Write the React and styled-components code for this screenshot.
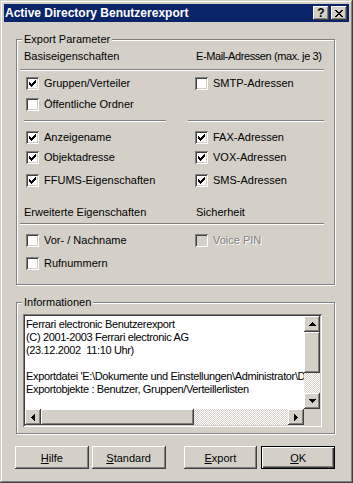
import React from 'react';
import styled, { createGlobalStyle } from 'styled-components';

const GlobalStyle = createGlobalStyle`
  html, body {
    margin: 0;
    padding: 0;
    background: #d4d0c8;
  }
  body {
    font-family: "Liberation Sans", Arial, sans-serif;
    font-size: 11px;
    color: #000;
  }
  * {
    box-sizing: border-box;
  }
`;

const raised = `
  background: #d4d0c8;
  box-shadow: inset -1px -1px #404040, inset 1px 1px #fff, inset -2px -2px #808080, inset 2px 2px #d4d0c8;
`;

const sunken = `
  box-shadow: inset 1px 1px #808080, inset -1px -1px #fff, inset 2px 2px #404040, inset -2px -2px #d4d0c8;
`;

const Window = styled.div`
  width: 353px;
  height: 483px;
  padding: 4px;
  background: #d4d0c8;
  box-shadow: inset -1px -1px #404040, inset 1px 1px #d4d0c8, inset -2px -2px #808080, inset 2px 2px #fff;
  display: flex;
  flex-direction: column;
`;

const TitleBar = styled.div`
  height: 18px;
  background: #0a246a;
  color: #fff;
  font-weight: bold;
  font-size: 12px;
  display: flex;
  align-items: center;
  padding: 0 2px 0 1px;
`;

const Title = styled.span`
  flex: 1;
  white-space: nowrap;
`;

const CaptionButton = styled.div`
  width: 16px;
  height: 14px;
  ${raised}
  display: flex;
  align-items: center;
  justify-content: center;
  margin-left: ${p => p.$ml || 0}px;
  color: #000;
  font-size: 12px;
  font-weight: bold;
  line-height: 14px;
`;

const Body = styled.div`
  padding: 0 14px 0 12px;
  display: flex;
  flex-direction: column;
`;

const GroupBox = styled.fieldset`
  margin: ${p => p.$mt}px 0 0;
  padding: 0 10px ${p => p.$pb}px 3px;
  border: 1px solid #808080;
  box-shadow: inset 1px 1px #fff, 1px 1px #fff;
  min-width: 0;
`;

const Legend = styled.legend`
  padding: 0 2px;
  margin-left: 2px;
  line-height: 13px;
  background: #d4d0c8;
`;

const TwoCols = styled.div`
  display: grid;
  grid-template-columns: 175px 1fr;
  margin-top: ${p => p.$mt || 0}px;
`;

const SectionLabel = styled.div`
  line-height: 13px;
  height: 13px;
  padding-left: ${p => p.$pl}px;
  letter-spacing: ${p => p.$ls || 0}px;
  white-space: nowrap;
`;

const Etched = styled.div`
  height: 2px;
  width: ${p => (p.$w ? `${p.$w}px` : 'auto')};
  border-top: 1px solid #808080;
  border-bottom: 1px solid #fff;
  margin-top: ${p => p.$mt || 0}px;
`;

const SplitRule = styled.div`
  display: flex;
  gap: 22px;
  padding-left: 4px;
  margin-top: ${p => p.$mt || 0}px;
`;

const Column = styled.div`
  display: flex;
  flex-direction: column;
  padding-left: ${p => p.$pl || 0}px;
`;

const CheckRow = styled.label`
  height: 20px;
  display: flex;
  align-items: center;
  margin-top: ${p => p.$mt || 0}px;
  color: ${p => (p.$disabled ? '#808080' : '#000')};
  text-shadow: ${p => (p.$disabled ? '1px 1px #fff' : 'none')};
  white-space: nowrap;
`;

const Box = styled.span`
  width: 13px;
  height: 13px;
  flex: none;
  position: relative;
  background: ${p => (p.$disabled ? '#d4d0c8' : '#fff')};
  ${sunken}
  margin-right: 5px;
  svg {
    position: absolute;
    left: 3px;
    top: 3px;
  }
`;

const InfoField = styled.div`
  margin: 5px 2px 0 3px;
  height: 113px;
  padding: 2px;
  ${sunken}
  display: grid;
  grid-template-columns: 1fr 16px;
  grid-template-rows: 1fr 16px;
`;

const InfoText = styled.div`
  background: #fff;
  padding: 2px 0 0 1px;
  line-height: 13px;
  letter-spacing: -0.35px;
  white-space: pre;
  overflow: hidden;
`;

const VScroll = styled.div`
  display: flex;
  flex-direction: column;
`;

const HScroll = styled.div`
  display: flex;
`;

const ScrollButton = styled.div`
  width: 16px;
  height: 16px;
  flex: none;
  ${raised}
  display: flex;
  align-items: center;
  justify-content: center;
`;

const Thumb = styled.div`
  flex: none;
  width: ${p => p.$w || 16}px;
  height: ${p => p.$h || 16}px;
  ${raised}
`;

const Track = styled.div`
  flex: 1;
  background: repeating-conic-gradient(#fff 0 25%, #d4d0c8 0 50%) 0 0 / 2px 2px;
`;

const Corner = styled.div`
  background: #d4d0c8;
`;

const Footer = styled.div`
  display: flex;
  margin: 12px 0 0 -1px;
`;

const Button = styled.button`
  width: 75px;
  height: 23px;
  padding: 0;
  border: none;
  font: inherit;
  color: #000;
  margin-left: ${p => p.$ml || 0}px;
  ${raised}
  ${p =>
    p.$default &&
    `box-shadow: inset 0 0 0 1px #000, inset 2px 2px #fff, inset -2px -2px #404040, inset -3px -3px #808080;`}
`;

const Key = styled.span`
  text-decoration: underline;
`;

const pix = (runs) => runs.map(([x, y, w]) => `M${x} ${y}h${w}v1h-${w}z`).join('');

const CheckMark = ({ color = '#000' }) => (
  <svg width="7" height="7" viewBox="0 0 7 7" shapeRendering="crispEdges">
    <path
      fill={color}
      d={pix([[6, 0, 1], [5, 1, 2], [0, 2, 1], [4, 2, 3], [0, 3, 2], [3, 3, 3], [0, 4, 5], [1, 5, 3], [2, 6, 1]])}
    />
  </svg>
);

const CloseGlyph = () => (
  <svg width="8" height="7" viewBox="0 0 8 7" shapeRendering="crispEdges">
    <path
      fill="#000"
      d={pix([[0, 0, 2], [6, 0, 2], [1, 1, 2], [5, 1, 2], [2, 2, 4], [3, 3, 2], [2, 4, 4], [1, 5, 2], [5, 5, 2], [0, 6, 2], [6, 6, 2]])}
    />
  </svg>
);

const Arrow = ({ dir }) => {
  const runs = {
    up: [[3, 0, 1], [2, 1, 3], [1, 2, 5], [0, 3, 7]],
    down: [[0, 0, 7], [1, 1, 5], [2, 2, 3], [3, 3, 1]],
  };
  if (dir === 'up' || dir === 'down') {
    return (
      <svg width="7" height="4" viewBox="0 0 7 4" shapeRendering="crispEdges">
        <path fill="#000" d={pix(runs[dir])} />
      </svg>
    );
  }
  const side = dir === 'left'
    ? 'M3 0h1v7h-1zM2 1h1v5h-1zM1 2h1v3h-1zM0 3h1v1h-1z'
    : 'M0 0h1v7h-1zM1 1h1v5h-1zM2 2h1v3h-1zM3 3h1v1h-1z';
  return (
    <svg width="4" height="7" viewBox="0 0 4 7" shapeRendering="crispEdges">
      <path fill="#000" d={side} />
    </svg>
  );
};

function Check({ checked, disabled, mt, children }) {
  return (
    <CheckRow $disabled={disabled} $mt={mt}>
      <Box $disabled={disabled}>{checked && <CheckMark />}</Box>
      <span>{children}</span>
    </CheckRow>
  );
}

const infoLines = [
  'Ferrari electronic Benutzerexport',
  '(C) 2001-2003 Ferrari electronic AG',
  '(23.12.2002  11:10 Uhr)',
  '',
  "Exportdatei 'E:\\Dokumente und Einstellungen\\Administrator\\Desktop\\export.csv'",
  'Exportobjekte : Benutzer, Gruppen/Verteillerlisten',
].join('\n');

export default function App() {
  return (
    <>
      <GlobalStyle />
      <Window>
        <TitleBar>
          <Title>Active Directory Benutzerexport</Title>
          <CaptionButton>?</CaptionButton>
          <CaptionButton $ml={2}>
            <CloseGlyph />
          </CaptionButton>
        </TitleBar>

        <Body>
          <GroupBox $mt={11} $pb={11}>
            <Legend>Export Parameter</Legend>

            <TwoCols $mt={4}>
              <SectionLabel $pl={4}>Basiseigenschaften</SectionLabel>
              <SectionLabel $pl={1} $ls={-0.4}>E-Mail-Adressen (max. je 3)</SectionLabel>
            </TwoCols>
            <Etched $mt={6} />

            <TwoCols $mt={2}>
              <Column $pl={6}>
                <Check checked>Gruppen/Verteiler</Check>
                <Check mt={1}>Öffentliche Ordner</Check>
              </Column>
              <Column>
                <Check>SMTP-Adressen</Check>
              </Column>
            </TwoCols>

            <SplitRule $mt={6}>
              <Etched $w={142} />
              <Etched $w={136} />
            </SplitRule>

            <TwoCols $mt={5}>
              <Column $pl={6}>
                <Check checked>Anzeigename</Check>
                <Check checked>Objektadresse</Check>
                <Check checked mt={3}>FFUMS-Eigenschaften</Check>
              </Column>
              <Column>
                <Check checked>FAX-Adressen</Check>
                <Check checked>VOX-Adressen</Check>
                <Check checked mt={3}>SMS-Adressen</Check>
              </Column>
            </TwoCols>

            <TwoCols $mt={16}>
              <SectionLabel $pl={4}>Erweiterte Eigenschaften</SectionLabel>
              <SectionLabel $pl={1}>Sicherheit</SectionLabel>
            </TwoCols>
            <Etched $mt={4} />

            <TwoCols $mt={5}>
              <Column $pl={6}>
                <Check>Vor- / Nachname</Check>
                <Check mt={3}>Rufnummern</Check>
              </Column>
              <Column>
                <Check disabled>Voice PIN</Check>
              </Column>
            </TwoCols>
          </GroupBox>

          <GroupBox $mt={11} $pb={6}>
            <Legend>Informationen</Legend>
            <InfoField>
              <InfoText>{infoLines}</InfoText>
              <VScroll>
                <ScrollButton><Arrow dir="up" /></ScrollButton>
                <Thumb $h={41} />
                <Track />
                <ScrollButton><Arrow dir="down" /></ScrollButton>
              </VScroll>
              <HScroll>
                <ScrollButton><Arrow dir="left" /></ScrollButton>
                <Thumb $w={153} />
                <Track />
                <ScrollButton><Arrow dir="right" /></ScrollButton>
              </HScroll>
              <Corner />
            </InfoField>
          </GroupBox>

          <Footer>
            <Button><Key>H</Key>ilfe</Button>
            <Button $ml={3}><Key>S</Key>tandard</Button>
            <Button $ml={18}><Key>E</Key>xport</Button>
            <Button $ml={4} $default><Key>O</Key>K</Button>
          </Footer>
        </Body>
      </Window>
    </>
  );
}
